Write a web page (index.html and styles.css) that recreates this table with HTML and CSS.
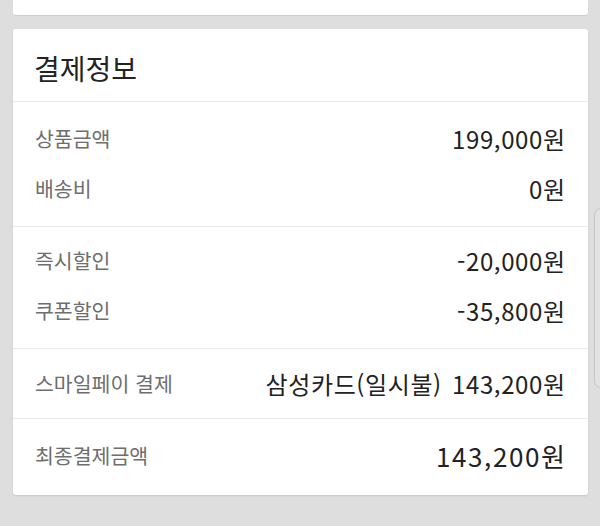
FILE: index.html
```html
<!DOCTYPE html>
<html lang="ko">
<head>
<meta charset="utf-8">
<title>결제정보</title>
<link rel="stylesheet" href="styles.css">
</head>
<body>
<div class="screen">
  <div class="prev-card"></div>
  <section class="card">
    <h2 class="card-title">결제정보</h2>
    <div class="group group-1">
      <div class="row"><span class="label">상품금액</span><span class="value">199,000원</span></div>
      <div class="row"><span class="label">배송비</span><span class="value">0원</span></div>
    </div>
    <div class="group group-2">
      <div class="row"><span class="label">즉시할인</span><span class="value">-20,000원</span></div>
      <div class="row"><span class="label">쿠폰할인</span><span class="value">-35,800원</span></div>
    </div>
    <div class="group group-3">
      <div class="row"><span class="label">스마일페이 결제</span><span class="value">삼성카드(일시불) 143,200원</span></div>
    </div>
    <div class="group group-4">
      <div class="row row-total"><span class="label">최종결제금액</span><span class="value value-total">143,200원</span></div>
    </div>
  </section>
  <div class="scroll-thumb"></div>
</div>
</body>
</html>
```
FILE: styles.css
```css
* { box-sizing: border-box; }
html, body {
  margin: 0;
  padding: 0;
  background: #dedede;
  font-family: "Noto Sans CJK KR", "Noto Sans", sans-serif;
}
.screen {
  position: relative;
  width: 600px;
  height: 526px;
  overflow: hidden;
  padding: 0 12px 0 13px;
  display: flex;
  flex-direction: column;
  gap: 14px;
}
.prev-card {
  height: 15px;
  background: #fff;
  border-radius: 0 0 3px 3px;
  box-shadow: 0 1px 1px rgba(0,0,0,0.08);
}
.card {
  background: #fff;
  border-radius: 3px;
  box-shadow: 0 1px 2px rgba(0,0,0,0.1);
}
.card-title {
  margin: 0;
  height: 73px;
  display: flex;
  align-items: center;
  padding: 6px 22px 0 21px;
  font-size: 28px;
  font-weight: 400;
  color: #222;
  border-bottom: 1px solid #ebebeb;
}
.group {
  border-top: 1px solid #ebebeb;
  padding: 0 23px 0 22px;
}
.group-1 { border-top: none; padding-top: 11px; padding-bottom: 13px; }
.group-2 { padding-top: 8px; padding-bottom: 13px; }
.group-3 { padding-top: 9px; padding-bottom: 10px; }
.group-4 { padding-top: 11px; padding-bottom: 15px; }
.row {
  height: 50px;
  display: flex;
  justify-content: space-between;
  align-items: center;
}
.label {
  font-size: 20.5px;
  color: #6e6e6e;
}
.value {
  font-size: 24px;
  letter-spacing: 0.6px;
  word-spacing: 3px;
  margin-right: -0.6px;
  color: #222;
}
.value-total {
  font-size: 26px;
  letter-spacing: 1.6px;
  margin-right: -1.6px;
}
.scroll-thumb {
  position: absolute;
  left: 594px;
  top: 208px;
  width: 14px;
  height: 180px;
  border: 1px solid #c4c4c4;
  border-radius: 7px;
  background: #e2e2e2;
}
```
